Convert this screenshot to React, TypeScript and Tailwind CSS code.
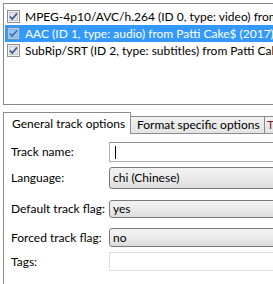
import React from 'react';

const tracks = [
  { label: 'MPEG-4p10/AVC/h.264 (ID 0, type: video) from Patti Cake$ (2017)', selected: false },
  { label: 'AAC (ID 1, type: audio) from Patti Cake$ (2017)', selected: true },
  { label: 'SubRip/SRT (ID 2, type: subtitles) from Patti Cake$ (2017)', selected: false },
];

const Check: React.FC<{ faded?: boolean }> = ({ faded }) => (
  <svg width="13" height="13" viewBox="0 0 13 13" className={faded ? 'opacity-60' : ''}>
    <rect x="0.5" y="0.5" width="12" height="12" fill="#f4f4f4" stroke="#8e8f8f" />
    <rect x="2.5" y="2.5" width="8" height="8" fill="#e3e6ea" stroke="#c4c8cf" />
    <path d="M3 6.5 L5.3 9 L10 3.5" fill="none" stroke="#3a5485" strokeWidth="1.7" />
  </svg>
);

const Combo: React.FC<{ value: string; h: string; mt: string }> = ({ value, h, mt }) => (
  <div
    className={`${h} ${mt} w-[200px] shrink-0 rounded-[3px] border border-[#7a7a7a] bg-gradient-to-b from-[#f3f3f3] via-[#ebebeb] to-[#dcdcdc] pl-[3px] flex items-center text-black`}
  >
    {value}
  </div>
);

export default function App() {
  return (
    <div
      className="w-[273px] h-[284px] overflow-hidden bg-white text-[12px] text-black"
      style={{ fontFamily: 'Lato, "Noto Sans", sans-serif' }}
    >
      {/* track list */}
      <div className="pt-[3px] pl-[3px]">
        <div className="w-[300px] h-[102px] border border-r-0 border-[#828790] pt-[4px] pl-[1px]">
          {tracks.map((t) => (
            <div
              key={t.label}
              className={`h-[17px] flex items-center whitespace-nowrap ${t.selected ? 'bg-[#3399ff] text-white' : ''}`}
            >
              <span className="ml-[2px] mr-[5px] flex">
                <Check faded={t.selected} />
              </span>
              {t.label}
            </div>
          ))}
        </div>
      </div>

      {/* tabs */}
      <div className="mt-[7px] ml-[3px] flex items-end h-[22px] whitespace-nowrap">
        <div className="w-[128px] h-[22px] shrink-0 border border-b-0 border-[#898c95] bg-white pl-[8px] pt-[2px]">
          General track options
        </div>
        <div className="w-[134px] h-[18px] shrink-0 border border-l-0 border-[#898c95] bg-gradient-to-b from-[#f2f2f2] to-[#e3e3e3] pl-[6px] leading-[16px]">
          Format specific options
        </div>
        <div className="w-[200px] h-[18px] shrink-0 border border-l-0 border-[#898c95] bg-gradient-to-b from-[#f2f2f2] to-[#e3e3e3] pl-[2px] leading-[16px] text-[#7b1b1b]">
          Timestamps and default duration
        </div>
      </div>

      {/* general track options panel */}
      <div className="ml-[3px] h-[160px] border-l border-[#898c95] pl-[7px] flex flex-col">
        <div className="flex items-center mt-[8px]">
          <span className="w-[98px] shrink-0">Track name:</span>
          <div className="w-[200px] h-[20px] shrink-0 border border-[#abadb3] border-t-[#8e8f8f] flex items-center pl-[5px]">
            <span className="w-px h-[13px] bg-black" />
          </div>
        </div>
        <div className="flex items-center">
          <span className="w-[98px] shrink-0 mt-[5px]">Language:</span>
          <Combo value="chi (Chinese)" h="h-[22px]" mt="mt-[5px]" />
        </div>
        <div className="flex items-center">
          <span className="w-[98px] shrink-0 mt-[11px]">Default track flag:</span>
          <Combo value="yes" h="h-[18px]" mt="mt-[11px]" />
        </div>
        <div className="flex items-center">
          <span className="w-[98px] shrink-0 mt-[10px]">Forced track flag:</span>
          <Combo value="no" h="h-[19px]" mt="mt-[10px]" />
        </div>
        <div className="flex items-center">
          <span className="w-[98px] shrink-0 mt-[5px]">Tags:</span>
          <div className="w-[200px] h-[19px] mt-[5px] shrink-0 border border-[#dcdfe3]" />
        </div>
      </div>
    </div>
  );
}
